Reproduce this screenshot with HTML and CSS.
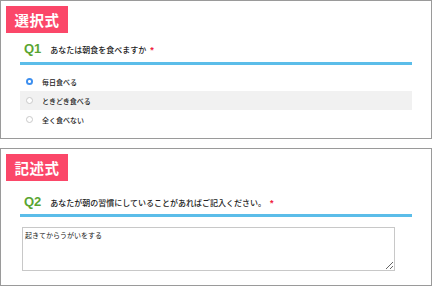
FILE: index.html
```html
<!DOCTYPE html>
<html lang="ja">
<head>
<meta charset="utf-8">
<link rel="stylesheet" href="styles.css">
</head>
<body>
<section class="panel panel--choice">
  <div class="badge">選択式</div>
  <div class="question">
    <div class="q-head">
      <span class="q-num">Q1</span>
      <span class="q-text">あなたは朝食を食べますか</span>
      <span class="req">*</span>
    </div>
    <ul class="options">
      <li class="option"><span class="radio radio--on"></span><span class="opt-label">毎日食べる</span></li>
      <li class="option option--hover"><span class="radio"></span><span class="opt-label">ときどき食べる</span></li>
      <li class="option"><span class="radio"></span><span class="opt-label">全く食べない</span></li>
    </ul>
  </div>
</section>
<section class="panel panel--text">
  <div class="badge">記述式</div>
  <div class="question">
    <div class="q-head q-head--text">
      <span class="q-num">Q2</span>
      <span class="q-text">あなたが朝の習慣にしていることがあればご記入ください。</span>
      <span class="req">*</span>
    </div>
    <textarea class="answer">起きてからうがいをする</textarea>
  </div>
</section>
</body>
</html>
```
FILE: styles.css
```css
html, body {
  margin: 0;
  padding: 0;
  background: #fff;
}
body {
  font-family: "Noto Sans CJK JP", "Noto Sans", sans-serif;
  color: #333;
  width: 432px;
}
.panel {
  border: 1px solid #9a9a9a;
  box-sizing: border-box;
}
.panel--choice {
  height: 139px;
}
.panel--text {
  margin-top: 9px;
  height: 138px;
}
.badge {
  margin: 5px 0 0 5px;
  width: 62px;
  height: 27px;
  background: #fb4769;
  color: #fff;
  font-weight: 700;
  font-size: 14.5px;
  line-height: 27px;
  text-align: center;
  letter-spacing: 0.5px;
}
.question {
  margin: 0 19px 0 19px;
}
.q-head {
  display: flex;
  align-items: baseline;
  padding: 8px 0 4px 4px;
  line-height: 16px;
  border-bottom: 3px solid #5bbde9;
}
.q-head--text {
  padding-top: 13px;
  padding-bottom: 3px;
}
.q-num {
  font-family: "Liberation Sans", Arial, sans-serif;
  font-weight: 700;
  font-size: 13px;
  color: #5aa532;
}
.q-text {
  margin-left: 9px;
  font-size: 8px;
  font-weight: 500;
  color: #222;
}
.req {
  margin-left: 4px;
  font-family: "Liberation Sans", Arial, sans-serif;
  font-size: 9px;
  color: #f0203c;
  font-weight: 700;
}
.options {
  list-style: none;
  margin: 7px 0 0 0;
  padding: 0;
}
.option {
  display: flex;
  align-items: center;
  height: 19px;
  padding-left: 6px;
}
.option--hover {
  background: #f1f1f1;
}
.radio {
  width: 7px;
  height: 7px;
  box-sizing: border-box;
  border-radius: 50%;
  border: 1px solid #c9c9c9;
  background: #fff;
}
.radio--on {
  border: none;
  background: radial-gradient(circle, #fff 0 1.2px, #3d8fef 1.8px);
}
.opt-label {
  margin-left: 9px;
  font-size: 7px;
  font-weight: 500;
  color: #222;
}
.answer {
  display: block;
  margin: 10px 0 0 2px;
  width: 373px;
  height: 44px;
  box-sizing: border-box;
  border: 1px solid #c8c8c8;
  padding: 2px 2px;
  font-family: "Noto Sans CJK JP", sans-serif;
  font-size: 7px;
  line-height: 11px;
  color: #222;
  resize: both;
}
```
